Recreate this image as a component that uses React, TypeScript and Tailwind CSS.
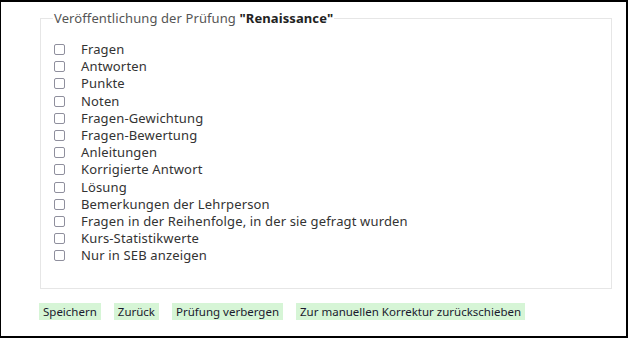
import React from 'react';

// Optionen, die veröffentlicht werden können
const options = [
  'Fragen',
  'Antworten',
  'Punkte',
  'Noten',
  'Fragen-Gewichtung',
  'Fragen-Bewertung',
  'Anleitungen',
  'Korrigierte Antwort',
  'Lösung',
  'Bemerkungen der Lehrperson',
  'Fragen in der Reihenfolge, in der sie gefragt wurden',
  'Kurs-Statistikwerte',
  'Nur in SEB anzeigen',
];

const buttons = ['Speichern', 'Zurück', 'Prüfung verbergen', 'Zur manuellen Korrektur zurückschieben'];

export default function App() {
  return (
    <div
      className="w-[628px] h-[338px] bg-white border-black border-t-2 border-r-2 border-b-2 border-l overflow-hidden text-[13px] text-[#333]"
      style={{ fontFamily: '"Noto Sans", "Open Sans", sans-serif' }}
    >
      <div className="pl-[39px] pr-[14px] pt-[7px]">
        <fieldset className="border border-[#e6e6e6] h-[280px] pl-[13px] pr-3 m-0">
          <legend className="px-[1px] -ml-[1px] text-[13px] text-[#555] leading-[18px] tracking-[0.1px]">
            Veröffentlichung der Prüfung <b className="text-[#222]">"Renaissance"</b>
          </legend>
          <ul className="mt-[14px] flex flex-col">
            {options.map((opt) => (
              <li key={opt} className="flex items-center h-[17.2px]">
                <span className="w-[11px] h-[11px] border border-[#8f8f9d] rounded-[2px] bg-white shrink-0" />
                <span className="ml-[16px] leading-[17px] tracking-[0.15px]">{opt}</span>
              </li>
            ))}
          </ul>
        </fieldset>
      </div>

      <div className="flex gap-[13px] pl-[38px] mt-[14px]">
        {buttons.map((b) => (
          <button
            key={b}
            className="bg-[#d6f5d6] text-[#1a1a2e] text-[11.5px] h-[17px] px-[4px] leading-[17px]"
          >
            {b}
          </button>
        ))}
      </div>
    </div>
  );
}
